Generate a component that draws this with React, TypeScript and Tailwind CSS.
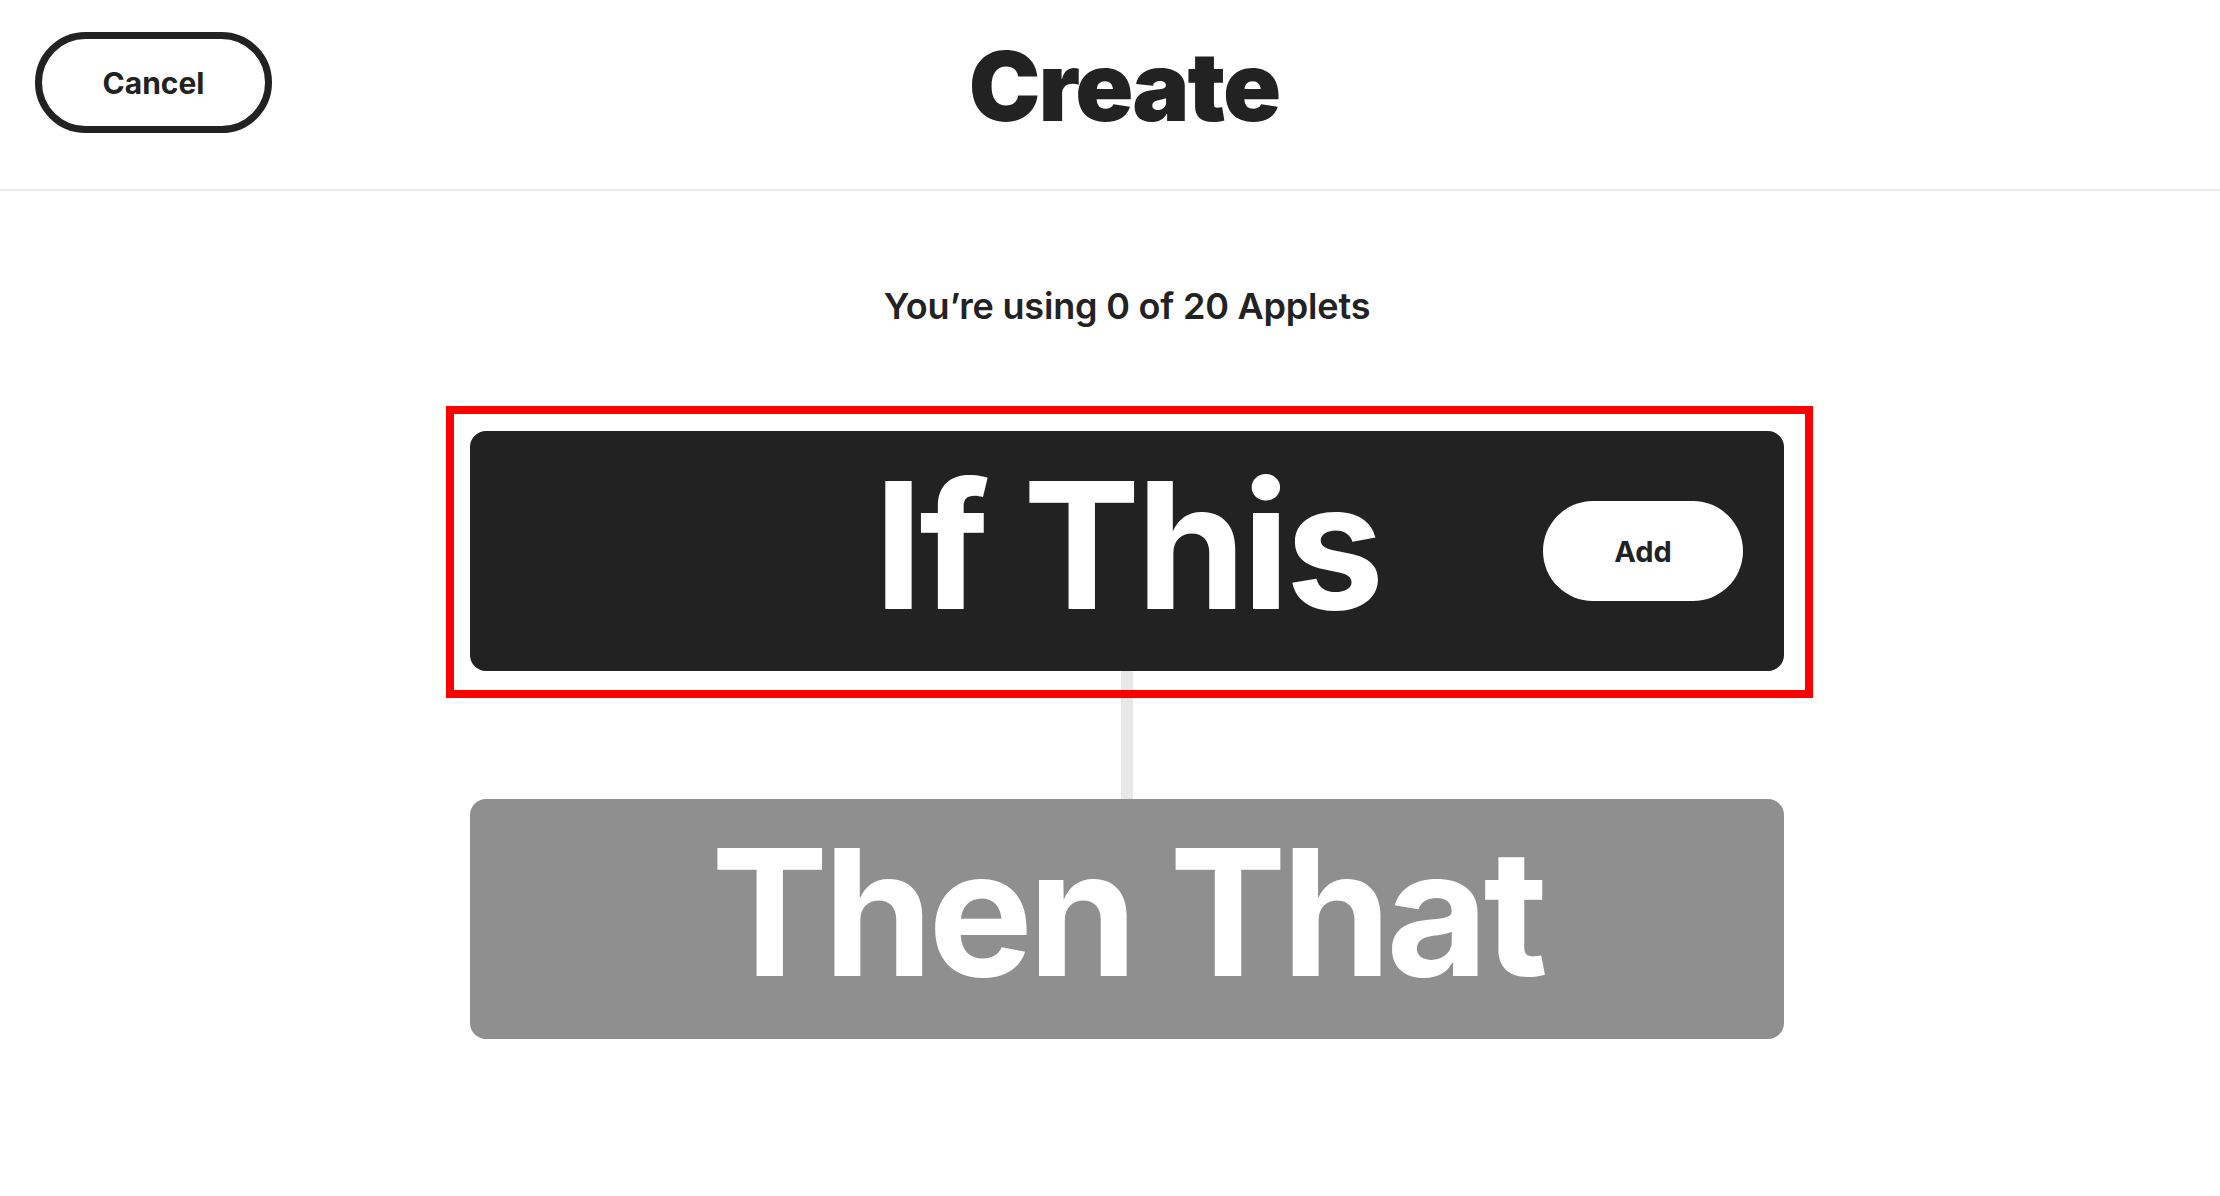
export default function App() {
  return (
    <div className="min-h-screen bg-white text-[#222222] font-['Inter','Lato',sans-serif]">
      {/* Header */}
      <header className="h-[191px] border-b-2 border-[#e9e9e9] grid grid-cols-[1fr_auto_1fr] items-start pl-[35px] pr-[7px]">
        <div className="flex items-center mt-[32px]">
          <button className="w-[237px] h-[101px] rounded-full border-[7px] border-[#222222] bg-white text-[30px] font-bold leading-none">
            Cancel
          </button>
        </div>
        <h1 className="mt-[38px] text-[96px] font-black leading-none tracking-[-2px]">Create</h1>
        <div />
      </header>

      {/* Builder */}
      <main className="flex flex-col items-center pl-[34px]">
        <p className="mt-[97px] text-[36px] font-semibold leading-[37px] tracking-[-0.2px]">You’re using 0 of 20 Applets</p>

        <div className="relative mt-[106px] w-[1314px] h-[240px] rounded-[16px] bg-[#222222] grid grid-cols-[1fr_auto_1fr] items-center">
          <div />
          <span className="text-white text-[176px] font-bold leading-none tracking-[-4px] mb-[12px]">If This</span>
          <div className="flex justify-end pr-[41px]">
            <button className="w-[200px] h-[100px] rounded-full bg-white text-[29px] font-bold leading-none text-[#222222]">
              Add
            </button>
          </div>
          {/* highlight annotation */}
          <div className="absolute -left-[24px] -right-[29px] -top-[25px] -bottom-[27px] z-10 border-[8px] border-[#ff0000] pointer-events-none" />
        </div>

        <div className="w-[12px] h-[128px] bg-[#e8e8e8]" />

        <div className="w-[1314px] h-[240px] rounded-[16px] bg-[#8f8f8f] flex items-center justify-center">
          <span className="text-white text-[176px] font-bold leading-none tracking-[-5px] mb-[14px]">Then That</span>
        </div>
      </main>
    </div>
  );
}
